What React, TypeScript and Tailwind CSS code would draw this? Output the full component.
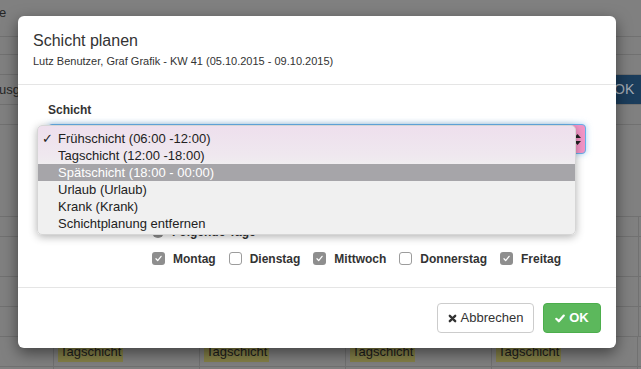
import React from 'react';

const shifts = [
  { label: 'Frühschicht (06:00 -12:00)', checked: true },
  { label: 'Tagschicht (12:00 -18:00)' },
  { label: 'Spätschicht (18:00 - 00:00)', active: true },
  { label: 'Urlaub (Urlaub)' },
  { label: 'Krank (Krank)' },
  { label: 'Schichtplanung entfernen' },
];

const days = [
  { name: 'Montag', on: true },
  { name: 'Dienstag', on: false },
  { name: 'Mittwoch', on: true },
  { name: 'Donnerstag', on: false },
  { name: 'Freitag', on: true },
];

function Box({ on }: { on: boolean }) {
  return on ? (
    <span className="w-[13px] h-[13px] rounded-[3px] bg-[#8e8e8e] flex items-center justify-center">
      <svg className="w-[9px] h-[9px]" viewBox="0 0 10 10" fill="none" stroke="white" strokeWidth={1.4}>
        <path d="M2.2 5.3l1.9 2L7.9 2.6" strokeLinecap="round" strokeLinejoin="round" />
      </svg>
    </span>
  ) : (
    <span className="w-[13px] h-[13px] rounded-[3px] bg-white border border-[#9c9c9c]" />
  );
}

// dimmed page behind the backdrop
function Backdrop() {
  return (
    <div className="absolute inset-0 bg-[#808080] text-[#262626] text-[13px] overflow-hidden">
      <div className="h-[37px] border-b border-[#717171] pt-[3px] -ml-[1px]">e</div>
      <div className="h-[18px] border-b border-[#717171]" />
      <div className="h-[20px] border-b border-[#717171]" />
      <div className="h-[30px] border-b border-[#717171] flex items-center justify-between">
        <span className="-ml-[1px] pt-[1px]">usge</span>
        <span className="h-full w-[60px] bg-[#1b3d5c] text-[#a3acb5] text-[14px] flex items-center pl-[8px] -mr-[25px]">
          OK
        </span>
      </div>
      <div className="h-[20px] border-b border-[#717171]" />
      <div className="h-[92px] border-b border-[#717171]" />
      <div className="h-[20px] border-b border-[#717171]">
        <div className="w-[639px] h-full border-r border-[#717171]" />
      </div>
      <div className="h-[40px] border-b border-[#717171]">
        <div className="w-[639px] h-full border-r border-[#717171]" />
      </div>
      <div className="h-[30px] border-b border-[#717171]">
        <div className="w-[639px] h-full border-r border-[#717171]" />
      </div>
      <div className="h-[30px] border-b border-[#717171]">
        <div className="w-[639px] h-full border-r border-[#717171]" />
      </div>
      {[0, 1].map((r) => (
        <div key={r} className="h-[30px] border-b border-[#717171] flex">
          <div className="w-[54px] border-r border-[#717171]" />
          {[0, 1, 2, 3].map((c) => (
            <div key={c} className="w-[146px] border-r border-[#717171] pl-[4px] pt-[4px]">
              {r === 0 && (
                <span className="inline-block bg-[#858148] text-[#1c1c1c] text-[13px] leading-[21px] px-[2px]">
                  Tagschicht
                </span>
              )}
            </div>
          ))}
        </div>
      ))}
    </div>
  );
}

export default function App() {
  return (
    <div className="relative w-[641px] h-[369px] overflow-hidden font-[family-name:'Liberation_Sans',Arial,sans-serif] text-[#333]">
      <Backdrop />

      <div className="absolute left-[18px] top-[16px] w-[598px] bg-white rounded-[6px] shadow-[0_5px_15px_rgba(0,0,0,0.5)]">
        {/* Header */}
        <div className="px-[15px] py-[15px] border-b border-[#e5e5e5]">
          <h4 className="text-[16px] leading-[20px] text-[#333]">Schicht planen</h4>
          <p className="mt-[3px] text-[11px] leading-[15px] text-[#333]">
            Lutz Benutzer, Graf Grafik - KW 41 (05.10.2015 - 09.10.2015)
          </p>
        </div>

        {/* Body */}
        <div className="relative h-[203px] px-[30px] pt-[17px] border-b border-[#e5e5e5]">
          <label className="block text-[12px] font-bold leading-[17px] mb-[5px]">Schicht</label>
          <div className="relative h-[30px] rounded-[4px] bg-[#f295c6] border border-[#66afe9] shadow-[0_0_6px_rgba(102,175,233,0.6)]">
            <svg className="absolute right-[4px] top-[9px] w-[7px] h-[11px]" viewBox="0 0 7 11" fill="#222">
              <path d="M3.5 0L7 4H0z M3.5 11L0 7h7z" />
            </svg>
          </div>

          <div className="mt-[69px] pl-[104px] flex items-center gap-[8px] h-[17px]">
            <span className="w-[12px] h-[12px] rounded-full bg-[#8e8e8e]" />
            <span className="text-[12px] font-bold">Folgende Tage</span>
          </div>

          <div className="mt-[10px] pl-[104px] flex items-center h-[17px] gap-[13px]">
            {days.map((d) => (
              <div key={d.name} className="flex items-center gap-[8px]">
                <Box on={d.on} />
                <span className="text-[12px] font-bold text-[#333]">{d.name}</span>
              </div>
            ))}
          </div>

          {/* Open select menu */}
          <div className="absolute left-[19px] top-[40px] w-[539px] h-[110px] rounded-[5px] py-[4px] bg-[linear-gradient(180deg,#eedfed_0px,#efe8ef_30px,#f0f0f0_42px)] shadow-[0_2px_8px_rgba(0,0,0,0.3)] border border-[#d6d6d6] text-[13px] text-[#222]">
            {shifts.map((s) => (
              <div
                key={s.label}
                className={`relative h-[17px] leading-[17px] pl-[20px] ${s.active ? 'bg-[#a6a5a9] text-white' : ''}`}
              >
                {s.checked && (
                  <span className="absolute left-[4px] top-0 font-[family-name:'DejaVu_Sans',sans-serif] text-[13px] font-bold">✓</span>
                )}
                {s.label}
              </div>
            ))}
          </div>
        </div>

        {/* Footer */}
        <div className="px-[15px] py-[15px] flex justify-end gap-[9px]">
          <button className="h-[30px] w-[97px] rounded-[4px] border border-[#cccccc] bg-white text-[13px] text-[#333] flex items-center justify-center gap-[4px]">
            <svg className="w-[9px] h-[9px]" viewBox="0 0 10 10" stroke="#333" strokeWidth={2.6} strokeLinecap="round">
              <path d="M2 2l6 6M8 2l-6 6" />
            </svg>
            Abbrechen
          </button>
          <button className="h-[30px] w-[58px] rounded-[4px] border border-[#4cae4c] bg-[#5cb85c] text-white text-[13px] font-bold flex items-center justify-center gap-[4px]">
            <svg className="w-[10px] h-[9px]" viewBox="0 0 10 9" fill="none" stroke="white" strokeWidth={2.2} strokeLinecap="round" strokeLinejoin="round">
              <path d="M1.3 4.8l2.5 2.5L8.8 1.6" />
            </svg>
            OK
          </button>
        </div>
      </div>
    </div>
  );
}
